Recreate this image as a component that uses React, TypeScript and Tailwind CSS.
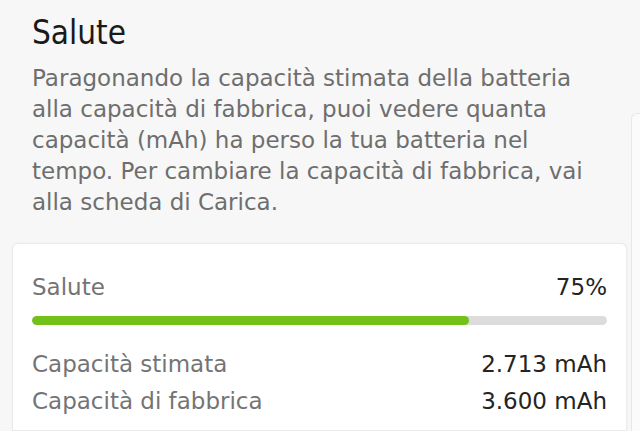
const health = {
  percent: 75,
  estimated: '2.713 mAh',
  design: '3.600 mAh',
};

const Row = ({ label, value }: { label: string; value: string }) => (
  <div className="flex justify-between items-center leading-[37px]">
    <span className="text-[#747474]">{label}</span>
    <span className="text-[#242424]">{value}</span>
  </div>
);

export default function App() {
  return (
    <div className="w-[640px] h-[431px] overflow-hidden bg-[#f7f7f7] flex font-['DejaVu_Sans',sans-serif]">
      <div className="w-[628px] shrink-0 pl-[12px] pr-[1px] flex flex-col">
        {/* Header */}
        <div className="pl-[20px] pt-[13px]">
          <h1 className="font-['DejaVu_Sans_Condensed',Roboto,sans-serif] text-[33px] leading-[40px] text-[#1a1a1a]">
            Salute
          </h1>
          <p className="mt-[10px] w-[566px] text-[23px] leading-[31px] text-[#6e6e6e]">
            Paragonando la capacità stimata della batteria alla capacità di fabbrica, puoi vedere
            quanta capacità (mAh) ha perso la tua batteria nel tempo. Per cambiare la capacità di
            fabbrica, vai alla scheda di Carica.
          </p>
        </div>

        {/* Card */}
        <div className="mt-[25px] flex-1 bg-white border border-[#ebebeb] rounded-t-[6px] shadow-[0_0_2px_rgba(0,0,0,0.06)] px-[19px] pt-[28px] text-[23px]">
          <div className="flex justify-between items-center leading-[31px]">
            <span className="text-[#747474]">Salute</span>
            <span className="text-[#242424]">{health.percent}%</span>
          </div>
          <div className="mt-[13px] h-[9px] rounded-full bg-[#dcdcdc] overflow-hidden">
            <div className="h-full w-[76%] rounded-full bg-[#72c119]" />
          </div>
          <div className="mt-[21px]">
            <Row label="Capacità stimata" value={health.estimated} />
            <Row label="Capacità di fabbrica" value={health.design} />
          </div>
        </div>
      </div>

      {/* next page peek */}
      <div className="flex-1 mt-[113px] ml-[3px] bg-[#fbfbfb] border-l border-t border-[#e8e8e8] rounded-tl-[6px]" />
    </div>
  );
}
